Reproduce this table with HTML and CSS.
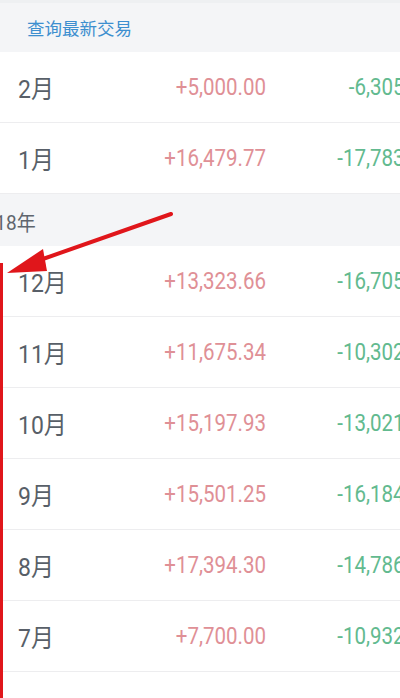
FILE: index.html
```html
<!DOCTYPE html>
<html lang="zh">
<head>
<meta charset="utf-8">
<link rel="stylesheet" href="styles.css">
</head>
<body>
<div class="page">
  <div class="topbar"><span class="link">查询最新交易</span></div>
  <div class="list">
    <div class="row"><span class="month">2月</span><span class="in">+5,000.00</span><span class="out">-6,305.20</span></div>
    <div class="row"><span class="month">1月</span><span class="in">+16,479.77</span><span class="out">-17,783.41</span></div>
    <div class="section"><span class="year">2018年</span></div>
    <div class="row"><span class="month">12月</span><span class="in">+13,323.66</span><span class="out">-16,705.38</span></div>
    <div class="row"><span class="month">11月</span><span class="in">+11,675.34</span><span class="out">-10,302.15</span></div>
    <div class="row"><span class="month">10月</span><span class="in">+15,197.93</span><span class="out">-13,021.60</span></div>
    <div class="row"><span class="month">9月</span><span class="in">+15,501.25</span><span class="out">-16,184.72</span></div>
    <div class="row"><span class="month">8月</span><span class="in">+17,394.30</span><span class="out">-14,786.09</span></div>
    <div class="row"><span class="month">7月</span><span class="in">+7,700.00</span><span class="out">-10,932.44</span></div>
    <div class="row"><span class="month">6月</span><span class="in">+14,210.00</span><span class="out">-12,093.50</span></div>
  </div>
  <svg class="annot" width="400" height="698" viewBox="0 0 400 698">
    <line x1="171" y1="214" x2="40" y2="260" stroke="#e0161b" stroke-width="4" stroke-linecap="round"/>
    <polygon points="7,273 43,249 47,271" fill="#e0161b"/>
    <rect x="0" y="263" width="3" height="435" fill="#e0161b"/>
  </svg>
</div>
</body>
</html>
```
FILE: styles.css
```css
html, body {
  margin: 0;
  padding: 0;
  background: #ffffff;
}
body {
  width: 400px;
  height: 698px;
  overflow: hidden;
  font-family: Roboto, "Noto Sans CJK SC", sans-serif;
}
.page {
  position: relative;
  width: 400px;
  height: 698px;
  overflow: hidden;
}
.topbar {
  height: 52px;
  background: #f4f5f7;
  border-top: 3px solid #eef0f2;
  box-sizing: border-box;
  display: flex;
  align-items: center;
  padding-left: 27px;
}
.link {
  color: #3d8fcf;
  font-size: 17.5px;
}
.list {
  width: 433px;
}
.row {
  display: flex;
  align-items: center;
  height: 71px;
  box-sizing: border-box;
  border-bottom: 1px solid #ededef;
}
.month {
  flex: 1;
  padding-left: 18px;
  font-size: 23px;
  color: #585f68;
  display: inline-block;
  transform: scaleY(1.1);
}
.in {
  width: 150px;
  text-align: right;
  font-size: 20.5px;
  color: #df9096;
  display: inline-block;
  transform: scaleY(1.14);
}
.out {
  width: 167px;
  text-align: right;
  font-size: 20.5px;
  color: #62ba8f;
  display: inline-block;
  transform: scaleY(1.14);
}
.section {
  height: 52px;
  background: #f4f5f7;
  display: flex;
  align-items: center;
  overflow: hidden;
}
.year {
  margin-left: -26px;
  font-size: 19px;
  color: #5f656d;
  display: inline-block;
  transform: scaleY(1.1);
}
.annot {
  position: absolute;
  left: 0;
  top: 0;
  pointer-events: none;
}
```
